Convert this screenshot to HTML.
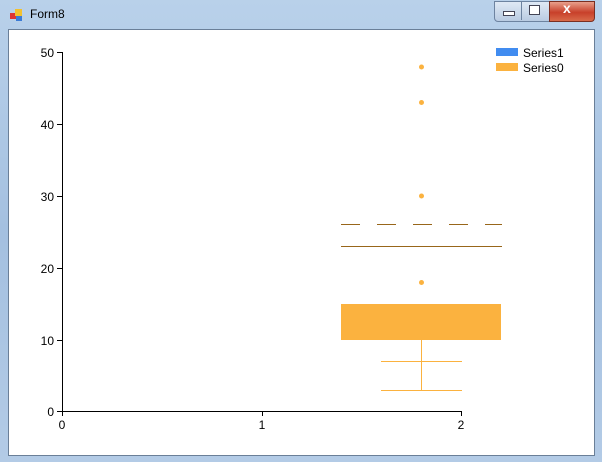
<!DOCTYPE html>
<html><head><style>
body{margin:0;width:602px;height:462px;overflow:hidden;background:linear-gradient(180deg,#b9d1ea 0%,#a4c0e0 50%,#b3cbe6 100%);font-family:"Liberation Sans",sans-serif;position:relative}
.client{position:absolute;left:8px;top:29px;width:585px;height:425px;background:#fff;border:1px solid #6a7f98}
.title{position:absolute;left:30px;top:7px;font-size:12px;color:#000}
</style></head><body>
<svg style="position:absolute;left:10px;top:9px" width="14" height="14"><rect x="0" y="4" width="6" height="6" fill="#d33"/><rect x="5" y="0" width="7" height="7" fill="#f2c12e"/><rect x="6" y="7" width="6" height="5" fill="#3b7bd6"/></svg>
<div class="title">Form8</div>
<div style="position:absolute;left:494px;top:1px;width:56px;height:19px;border:1px solid #6d83a0;border-radius:0 0 0 4px;background:linear-gradient(#dfe9f5,#b9cbe2)"></div>
<div style="position:absolute;left:521px;top:1px;width:1px;height:19px;background:#6d83a0"></div>
<div style="position:absolute;left:503px;top:11px;width:10px;height:3px;background:#fff;border:1px solid #445"></div>
<div style="position:absolute;left:529px;top:5px;width:9px;height:8px;border:1px solid #445;background:#fff"></div>
<div style="position:absolute;left:549px;top:1px;width:44px;height:19px;border:1px solid #7a2f22;border-radius:0 0 4px 0;background:linear-gradient(#e8a08c,#c8402a 55%,#d86a4a)"></div>
<div style="position:absolute;left:563px;top:0px;color:#fff;font-weight:bold;font-size:14px">x</div>
<div class="client"></div>
<svg style="position:absolute;left:0;top:0" width="602" height="462" font-family="Liberation Sans" font-size="12">
<g stroke="#000" stroke-width="1">
<line x1="62.5" y1="52" x2="62.5" y2="411.5"/>
<line x1="57" y1="411.5" x2="461.5" y2="411.5"/>
<line x1="57" y1="52.5" x2="62" y2="52.5"/><line x1="57" y1="124.5" x2="62" y2="124.5"/><line x1="57" y1="196.5" x2="62" y2="196.5"/><line x1="57" y1="268.5" x2="62" y2="268.5"/><line x1="57" y1="340.5" x2="62" y2="340.5"/>
<line x1="62.5" y1="411" x2="62.5" y2="416"/><line x1="262.5" y1="411" x2="262.5" y2="416"/><line x1="461.5" y1="411" x2="461.5" y2="416"/>
</g>
<g text-anchor="end" fill="#000"><text x="54" y="57">50</text><text x="54" y="129">40</text><text x="54" y="201">30</text><text x="54" y="273">20</text><text x="54" y="345">10</text><text x="54" y="416">0</text></g>
<g text-anchor="middle"><text x="62" y="429">0</text><text x="262" y="429">1</text><text x="461" y="429">2</text></g>
<g stroke="#98661a" stroke-width="1"><line x1="341" y1="224.5" x2="502" y2="224.5" stroke-dasharray="19,17"/><line x1="341" y1="246.5" x2="502" y2="246.5"/></g>
<rect x="341" y="304" width="160" height="36" fill="#fbb23f"/>
<g stroke="#fbb23f" stroke-width="1"><line x1="421.5" y1="340" x2="421.5" y2="390"/><line x1="381" y1="361.5" x2="462" y2="361.5"/><line x1="381" y1="390.5" x2="462" y2="390.5"/></g>
<g fill="#fbb23f"><circle cx="421.5" cy="67" r="2.5"/><circle cx="421.5" cy="102.5" r="2.5"/><circle cx="421.5" cy="196" r="2.5"/><circle cx="421.5" cy="282.5" r="2.5"/></g>
<rect x="496" y="48" width="22" height="8" fill="#418cf0"/><rect x="496" y="63" width="22" height="8" fill="#fbb23f"/>
<text x="523" y="57">Series1</text><text x="523" y="72">Series0</text>
</svg>
</body></html>
